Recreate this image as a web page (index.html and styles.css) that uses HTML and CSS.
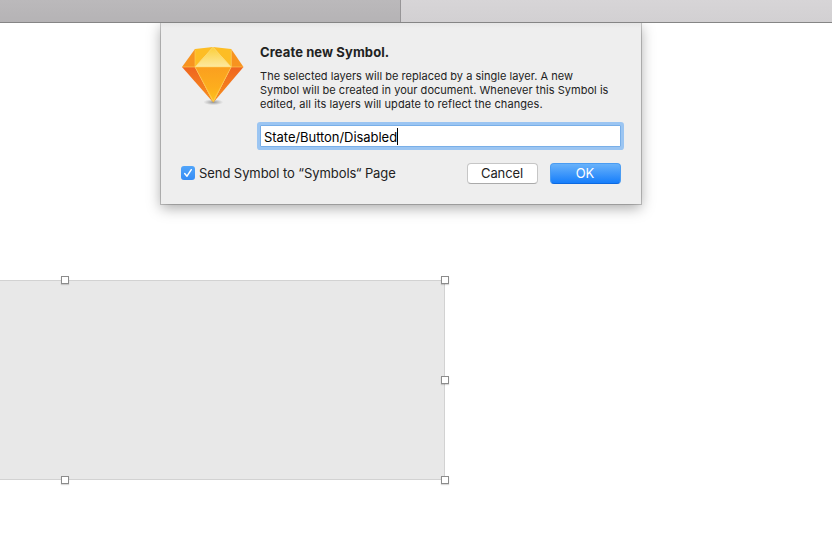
FILE: index.html
```html
<!DOCTYPE html>
<html lang="en">
<head>
<meta charset="utf-8">
<title>Create new Symbol</title>
<link rel="stylesheet" href="styles.css">
</head>
<body>
<header class="tabs"><div class="tab tab-inactive"></div><div class="tab"></div></header>
<main class="canvas">
  <section class="dialog">
    <div class="intro">
      <svg class="logo" viewBox="0 0 64 62" aria-hidden="true">
        <defs>
          <linearGradient id="front" x1="0" y1="0" x2="0" y2="1"><stop offset="0" stop-color="#fb9f1f"/><stop offset=".6" stop-color="#fdae1d"/><stop offset="1" stop-color="#fdc41c"/></linearGradient>
          <linearGradient id="side" x1="0" y1="0" x2="0" y2="1"><stop offset="0" stop-color="#ef6420"/><stop offset="1" stop-color="#f8911c"/></linearGradient>
          <linearGradient id="crown" x1="0" y1="0" x2="0" y2="1"><stop offset="0" stop-color="#fbce38"/><stop offset="1" stop-color="#fde9a0"/></linearGradient>
          <radialGradient id="ground"><stop offset="0" stop-color="#555" stop-opacity=".6"/><stop offset="1" stop-color="#777" stop-opacity="0"/></radialGradient>
        </defs>
        <ellipse cx="32.3" cy="57.2" rx="10" ry="3" fill="url(#ground)"/>
        <path d="M1 22 14 22 32.3 57.5Z" fill="url(#side)"/>
        <path d="M62.5 22 50.2 22 32.3 57.5Z" fill="url(#side)"/>
        <path d="M14 22H50.2L32.3 57.5Z" fill="url(#front)"/>
        <path d="M1 22 14 4V22Z" fill="#f79320"/>
        <path d="M62.5 22 50.2 4V22Z" fill="#f79320"/>
        <path d="M14 4 32 2 14 22ZM50.2 4 32 2 50.2 22Z" fill="#fdbd24"/>
        <path d="M14 22 32 2 50.2 22Z" fill="url(#crown)"/>
        <path d="M1.5 22H62M14 5V22L32.3 56 50.2 22V5M14 22 32 2.5 50.2 22" fill="none" stroke="#ffd45d" stroke-width=".75" stroke-opacity=".75"/>
      </svg>
      <div class="copy">
        <h1><span class="title">Create new Symbol.</span></h1>
        <p><span class="line l1">The selected layers will be replaced by a single layer. A new</span><span class="line l2">Symbol will be created in your document. Whenever this Symbol is</span><span class="line l3">edited, all its layers will update to reflect the changes.</span></p>
        <div class="field"><span class="value">State/Button/Disabled</span><i class="caret"></i></div>
      </div>
    </div>
    <div class="actions">
      <span class="check"><svg viewBox="0 0 14 14"><path d="M3.7 7.5 6 10.2 10.3 3.7" fill="none" stroke="#fff" stroke-width="1.5" stroke-linecap="round" stroke-linejoin="round"/></svg></span>
      <span class="label">Send Symbol to “Symbols“ Page</span>
      <span class="button cancel">Cancel</span>
      <span class="button ok">OK</span>
    </div>
  </section>
  <div class="layer">
    <i class="handle top mid"></i><i class="handle top right"></i><i class="handle center right"></i><i class="handle bottom mid"></i><i class="handle bottom right"></i>
  </div>
</main>
</body>
</html>
```
FILE: styles.css
```css
* { box-sizing: border-box; }
body { margin: 0; width: 832px; height: 544px; overflow: hidden; background: #fff; font-family: Inter, "Liberation Sans", sans-serif; color: #222; }
.tabs { display: flex; height: 23px; border-bottom: 1px solid #858585; position: relative; z-index: 1; }
.tab { flex: 1; background: linear-gradient(#d7d5d7, #d2d0d2); }
.tab-inactive { flex: 0 0 401px; background: linear-gradient(#bbb9bb, #b5b3b5); border-right: 1px solid #979597; }
.canvas { height: 521px; display: flex; flex-direction: column; }
.dialog { width: 480px; height: 181px; flex: none; margin-left: 161px; background: #eee; box-shadow: 0 0 0 1px rgba(0,0,0,.2), 0 4px 13px rgba(0,0,0,.34); padding: 22px 20px 0; background-image: linear-gradient(#e6e6e6, #eee 5px); }
.intro { display: flex; height: 102px; }
.logo { width: 64px; height: 62px; flex: none; }
.copy { margin-left: 15px; width: 361px; }
h1 { margin: 0; height: 24px; font-size: 13px; line-height: 15px; font-weight: 700; white-space: nowrap; }
.title { letter-spacing: .1px; }
p { margin: 0; font-size: 11px; line-height: 14px; height: 42px; }
.line { display: block; white-space: nowrap; }
.l1 { letter-spacing: .025px; }
.l2 { letter-spacing: .035px; }
.l3 { letter-spacing: .07px; }
.field { margin-top: 14px; height: 22px; display: flex; align-items: center; padding: 2px 0 0 3px; background: #fff; border: 1px solid #79afe8; box-shadow: 0 0 0 3px #9bc5f2; border-radius: 1px; font-size: 13px; color: #000; }
.value { white-space: nowrap; letter-spacing: -.05px; }
.caret { width: 1px; height: 17px; background: #000; margin-top: -2px; }
.actions { display: flex; align-items: center; height: 21px; margin-top: 16px; font-size: 13px; }
.check { width: 14px; height: 14px; border-radius: 3px; background: linear-gradient(#51a5fa, #358cf5); position: relative; top: -.5px; }
.check svg { display: block; width: 14px; height: 14px; }
.label { margin-left: 4px; white-space: nowrap; letter-spacing: -.07px; line-height: 19px; }
.button { width: 71px; height: 21px; line-height: 19px; text-align: center; border-radius: 4px; }
.cancel { margin-left: auto; background: #fff; border: 1px solid #c6c6c6; border-bottom-color: #aaa; letter-spacing: -.1px; padding-right: 1px; }
.ok { margin-left: 12px; color: #fff; background: linear-gradient(#69b2fa, #167efb); border: 1px solid #4a9cf2; border-bottom-color: #0c69e0; padding-right: 1px; }
.layer { position: relative; width: 445px; height: 200px; margin-top: 76px; background: #e8e8e8; border: solid #d2d2d2; border-width: 1px 1px 1px 0; }
.handle { position: absolute; width: 8px; height: 8px; background: #fff; border: 1px solid #8c8c8c; box-shadow: 0 1px 1px rgba(0,0,0,.15); }
.top { top: -5px; }
.center { top: 95px; }
.bottom { bottom: -5px; }
.mid { left: 61px; }
.right { right: -5px; }
```
